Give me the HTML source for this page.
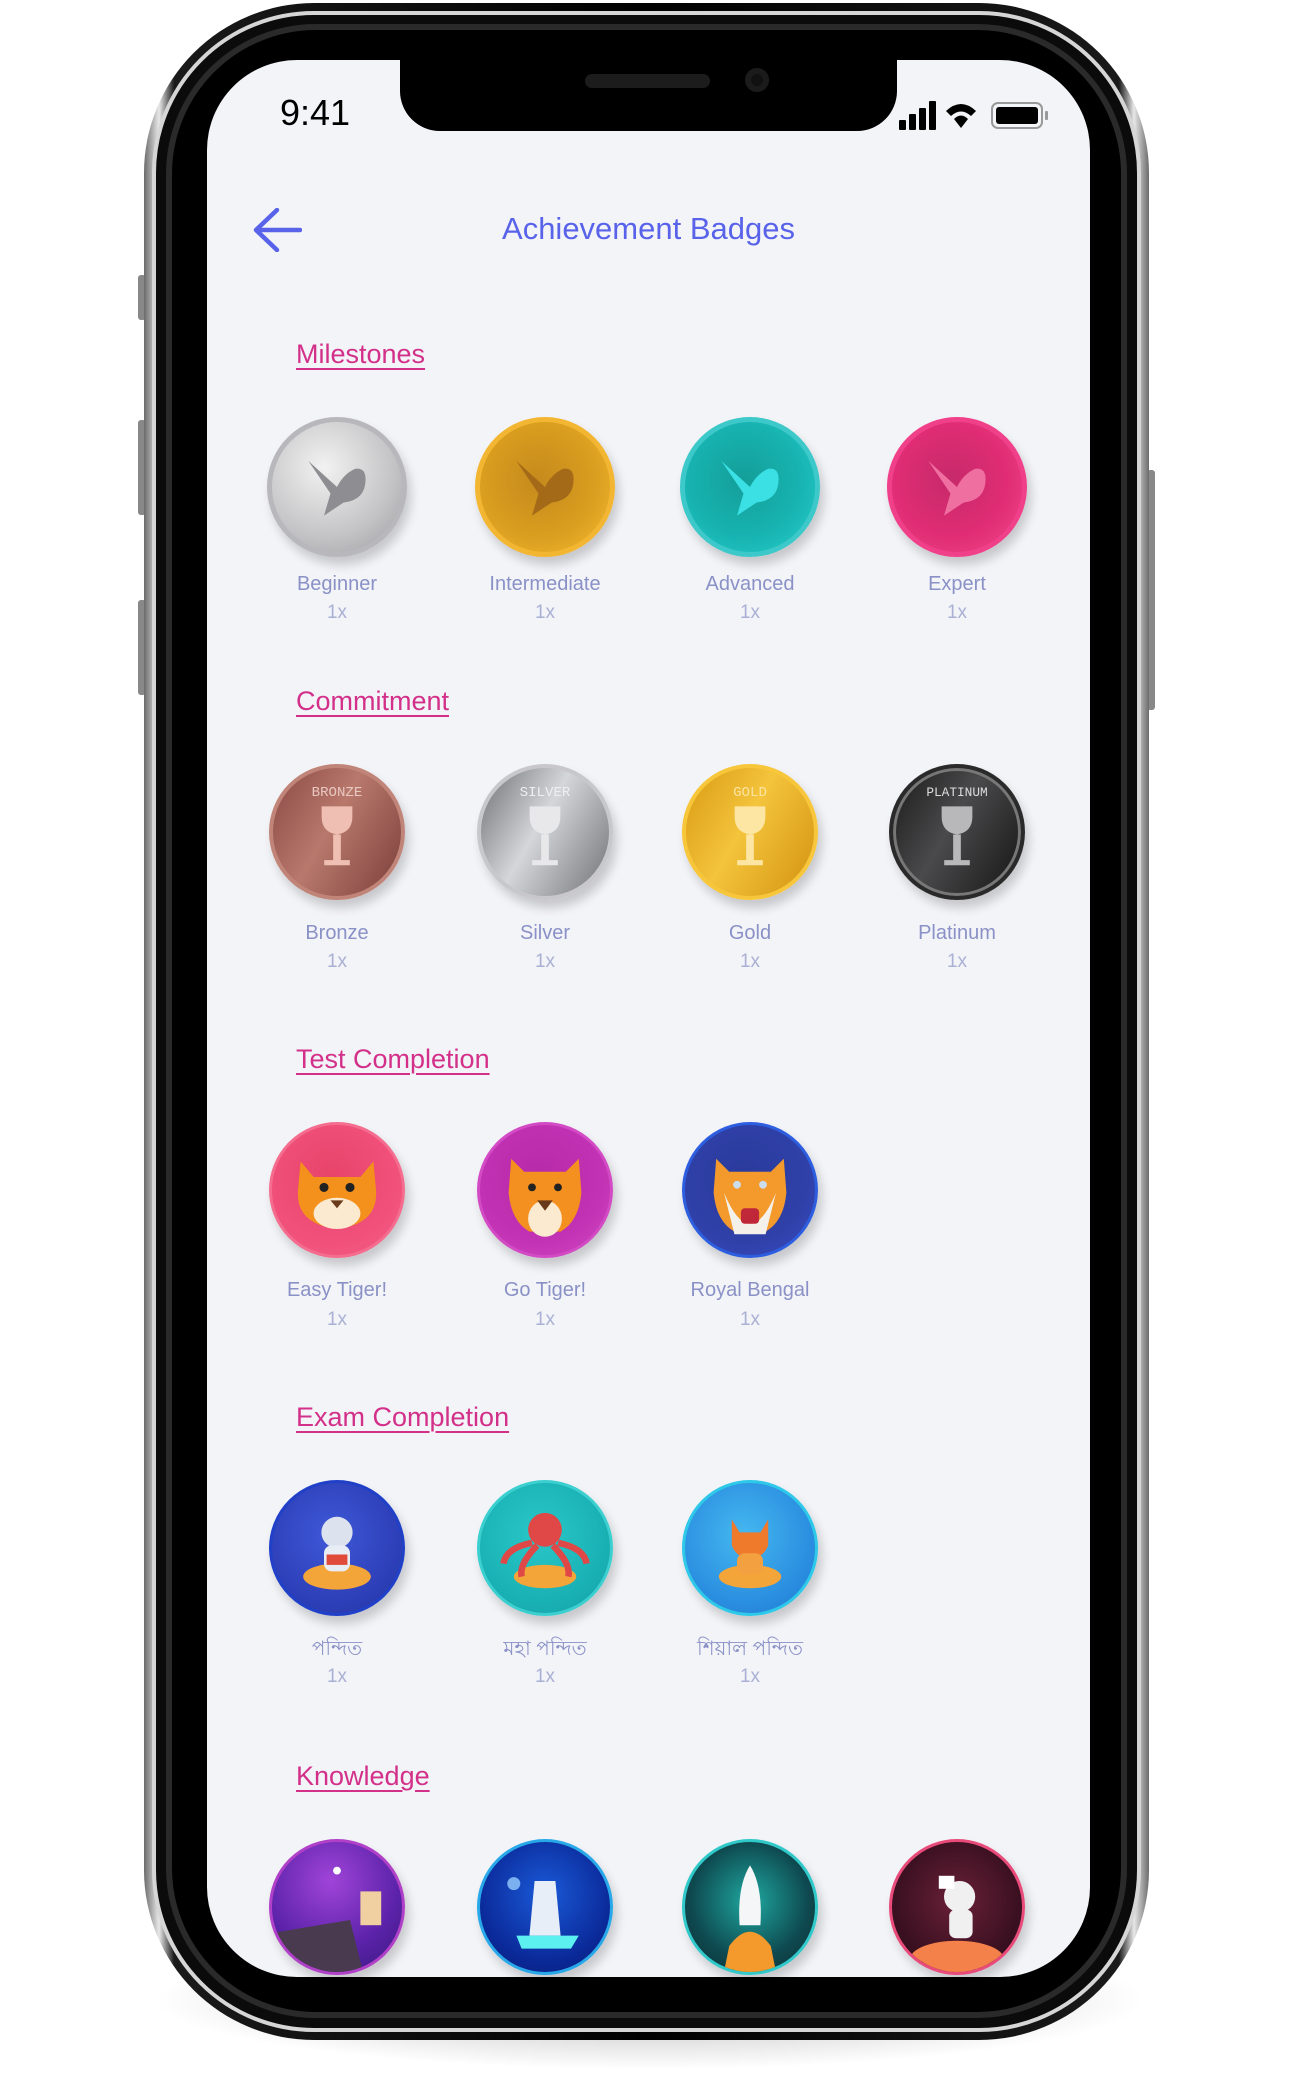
<!DOCTYPE html>
<html><head><meta charset="utf-8"><style>
*{margin:0;padding:0;box-sizing:border-box}
body{width:1296px;height:2095px;background:#fff;position:relative;overflow:hidden;font-family:"Liberation Sans","Noto Sans CJK SC",sans-serif}
.shadow{position:absolute;left:150px;top:1930px;width:1000px;height:140px;border-radius:50%;background:radial-gradient(ellipse at center,rgba(0,0,0,.28),rgba(0,0,0,0) 70%)}
.frame{position:absolute;left:144px;top:3px;width:1005px;height:2037px;border-radius:170px;background:linear-gradient(90deg,#6b6b6b,#e8e8e8 1.5%,#1a1a1a 3%,#000 50%,#1a1a1a 97%,#e8e8e8 98.5%,#6b6b6b)}
.frame2{position:absolute;left:152px;top:11px;width:989px;height:2021px;border-radius:162px;background:#0b0b0b;border:4px solid #d6d6d6}
.frame3{position:absolute;left:166px;top:24px;width:961px;height:1994px;border-radius:150px;background:#000;border:6px solid #2a2a2a}
.btn{position:absolute;background:#888;border-radius:3px}
.screen{position:absolute;left:207px;top:60px;width:883px;height:1917px;border-radius:90px;background:#f3f4f8;overflow:hidden}
.notch{position:absolute;left:193px;top:-10px;width:497px;height:81px;background:#000;border-radius:0 0 40px 40px}
.t{position:absolute;white-space:nowrap}
.sec{position:absolute;color:#d3308a;font-size:27px;text-decoration:underline;text-underline-offset:5px;text-decoration-thickness:1.5px}
.b{position:absolute;border-radius:50%;width:136px;height:136px;margin:-68px 0 0 -68px;box-shadow:4px 8px 10px rgba(0,0,0,.18);overflow:hidden}
.b svg{position:absolute;left:0;top:0;width:100%;height:100%}
.lb{position:absolute;width:200px;margin-left:-100px;text-align:center;color:#8a91c6;font-size:20px}
.lx{position:absolute;width:100px;margin-left:-50px;text-align:center;color:#aab0d4;font-size:19px}
</style></head><body>
<div class="shadow"></div>
<div class="btn" style="left:138px;top:275px;width:8px;height:45px"></div>
<div class="btn" style="left:138px;top:420px;width:8px;height:95px"></div>
<div class="btn" style="left:138px;top:600px;width:8px;height:95px"></div>
<div class="btn" style="left:1147px;top:470px;width:8px;height:240px"></div>
<div class="frame"></div><div class="frame2"></div><div class="frame3"></div>
<div class="screen">
 <div class="notch"></div>
 <div style="position:absolute;left:378px;top:14px;width:125px;height:14px;border-radius:7px;background:#1c1c1c"></div>
 <div style="position:absolute;left:538px;top:8px;width:24px;height:24px;border-radius:50%;background:#111;box-shadow:inset 0 0 0 6px #1b1b1b"></div>
 <div class="t" style="left:73px;top:32px;font-size:36px;color:#000">9:41</div>
 <svg style="position:absolute;left:692px;top:38px" width="160" height="36" viewBox="0 0 160 36">
  <rect x="0" y="22" width="7" height="10" rx="1" fill="#000"/><rect x="10" y="16" width="7" height="16" rx="1" fill="#000"/><rect x="20" y="10" width="7" height="22" rx="1" fill="#000"/><rect x="30" y="3" width="7" height="29" rx="1" fill="#000"/>
  <path d="M47 13 Q62 -1 77 13 L72 18 Q62 9 52 18Z M55 21 Q62 14 69 21 L62 30Z" fill="#000"/>
  <rect x="93" y="5" width="50" height="25" rx="6" fill="none" stroke="#999" stroke-width="2"/><rect x="97" y="9" width="42" height="17" rx="3" fill="#000"/><rect x="146" y="13" width="3" height="9" rx="1" fill="#999"/>
 </svg>
 <svg style="position:absolute;left:45px;top:148px" width="50" height="44" viewBox="0 0 50 44"><path d="M25 2 L4 22 L25 42 M4 22 L48 22" fill="none" stroke="#5963ea" stroke-width="4.5" stroke-linecap="round" stroke-linejoin="round"/></svg>
 <div class="t" style="left:0;width:883px;text-align:center;top:151px;font-size:31px;color:#5963ea">Achievement Badges</div>

 <div class="sec" style="left:89px;top:279px">Milestones</div>
 <div class="sec" style="left:89px;top:626px">Commitment</div>
 <div class="sec" style="left:89px;top:984px">Test Completion</div>
 <div class="sec" style="left:89px;top:1342px">Exam Completion</div>
 <div class="sec" style="left:89px;top:1701px">Knowledge</div>

 <!-- milestones -->
 <div class="b" style="left:130px;top:427px;width:140px;height:140px;margin:-70px 0 0 -70px;background:radial-gradient(circle at 40% 35%,#f2f2f2,#c4c4c6 60%,#9c9ca0);border:5px solid #b8b8bc"><svg viewBox="0 0 100 100"><path d="M28 30 L45 55 L40 72 L55 62 Q72 60 72 44 Q72 35 64 36 Q55 40 50 50 Z" fill="#8e8e92"/></svg></div>
 <div class="b" style="left:338px;top:427px;width:140px;height:140px;margin:-70px 0 0 -70px;background:radial-gradient(circle at 45% 45%,#c58a1c,#d99d1f 55%,#f5bc30);border:5px solid #f3b632"><svg viewBox="0 0 100 100"><path d="M28 30 L45 55 L40 72 L55 62 Q72 60 72 44 Q72 35 64 36 Q55 40 50 50 Z" fill="#a46a17"/></svg></div>
 <div class="b" style="left:543px;top:427px;width:140px;height:140px;margin:-70px 0 0 -70px;background:radial-gradient(circle at 45% 45%,#149e99,#17b3b0 55%,#27cfd0);border:5px solid #3dc8c9"><svg viewBox="0 0 100 100"><path d="M28 30 L45 55 L40 72 L55 62 Q72 60 72 44 Q72 35 64 36 Q55 40 50 50 Z" fill="#3be0e4"/></svg></div>
 <div class="b" style="left:750px;top:427px;width:140px;height:140px;margin:-70px 0 0 -70px;background:radial-gradient(circle at 45% 45%,#c62a6a,#e02c74 55%,#f24a8c);border:5px solid #f0408a"><svg viewBox="0 0 100 100"><path d="M28 30 L45 55 L40 72 L55 62 Q72 60 72 44 Q72 35 64 36 Q55 40 50 50 Z" fill="#f06fa1"/></svg></div>
 <div class="lb" style="left:130px;top:513px">Beginner</div><div class="lx" style="left:130px;top:542px">1x</div>
 <div class="lb" style="left:338px;top:513px">Intermediate</div><div class="lx" style="left:338px;top:542px">1x</div>
 <div class="lb" style="left:543px;top:513px">Advanced</div><div class="lx" style="left:543px;top:542px">1x</div>
 <div class="lb" style="left:750px;top:513px">Expert</div><div class="lx" style="left:750px;top:542px">1x</div>

 <!-- commitment -->
 <div class="b" style="left:130px;top:772px;background:linear-gradient(120deg,#8a4a45,#b8786c 45%,#7b3f3a);border:4px solid #c08478"><svg viewBox="0 0 100 100"><text x="50" y="22" text-anchor="middle" font-size="11" fill="#e8c8c0" font-family="Liberation Mono">BRONZE</text><path d="M38 30h24v8q0 12-12 14q-12-2-12-14z M47 52h6v20h-6z M40 72h20v4H40z" fill="#efbfb3"/></svg></div>
 <div class="b" style="left:338px;top:772px;background:linear-gradient(120deg,#6e7074,#d4d6da 45%,#707276);border:4px solid #c8c8cc"><svg viewBox="0 0 100 100"><text x="50" y="22" text-anchor="middle" font-size="11" fill="#eee" font-family="Liberation Mono">SILVER</text><path d="M38 30h24v8q0 12-12 14q-12-2-12-14z M47 52h6v20h-6z M40 72h20v4H40z" fill="#e8e8ea"/></svg></div>
 <div class="b" style="left:543px;top:772px;background:linear-gradient(120deg,#d89a12,#f4c43c 45%,#d39210);border:4px solid #f7c63a"><svg viewBox="0 0 100 100"><text x="50" y="22" text-anchor="middle" font-size="11" fill="#fbe3a0" font-family="Liberation Mono">GOLD</text><path d="M38 30h24v8q0 12-12 14q-12-2-12-14z M47 52h6v20h-6z M40 72h20v4H40z" fill="#fde6a4"/></svg></div>
 <div class="b" style="left:750px;top:772px;background:linear-gradient(120deg,#1a1a1a,#4a4a4c 45%,#141414);border:4px solid #2a2a2a;box-shadow:4px 8px 10px rgba(0,0,0,.18),inset 0 0 0 3px #777"><svg viewBox="0 0 100 100"><text x="50" y="22" text-anchor="middle" font-size="10" fill="#ddd" font-family="Liberation Mono">PLATINUM</text><path d="M38 30h24v8q0 12-12 14q-12-2-12-14z M47 52h6v20h-6z M40 72h20v4H40z" fill="#b8b8ba"/></svg></div>
 <div class="lb" style="left:130px;top:862px">Bronze</div><div class="lx" style="left:130px;top:891px">1x</div>
 <div class="lb" style="left:338px;top:862px">Silver</div><div class="lx" style="left:338px;top:891px">1x</div>
 <div class="lb" style="left:543px;top:862px">Gold</div><div class="lx" style="left:543px;top:891px">1x</div>
 <div class="lb" style="left:750px;top:862px">Platinum</div><div class="lx" style="left:750px;top:891px">1x</div>

 <!-- test completion -->
 <div class="b" style="left:130px;top:1130px;background:radial-gradient(circle at 45% 40%,#e8446a,#f0507a 60%,#f45f86);border:3px solid #f46c8e"><svg viewBox="0 0 100 100"><path d="M22 28 L32 40 L68 40 L78 28 L80 50 Q82 76 50 80 Q18 76 20 50Z" fill="#f4911c"/><ellipse cx="50" cy="68" rx="18" ry="12" fill="#fbe9d0"/><circle cx="40" cy="48" r="3.5" fill="#222"/><circle cx="60" cy="48" r="3.5" fill="#222"/><path d="M45 58 L55 58 L50 64Z" fill="#6a3b1a"/></svg></div>
 <div class="b" style="left:338px;top:1130px;background:radial-gradient(circle at 45% 40%,#b62aa8,#c232b4 60%,#d04ac2);border:3px solid #d24ac4"><svg viewBox="0 0 100 100"><path d="M24 26 L34 36 L66 36 L76 26 L78 52 Q76 74 62 82 L38 82 Q24 74 22 52Z" fill="#f49020"/><ellipse cx="50" cy="72" rx="13" ry="14" fill="#fbe9d0"/><path d="M44 58 L56 58 L50 66Z" fill="#6a3b1a"/><circle cx="40" cy="48" r="3" fill="#222"/><circle cx="60" cy="48" r="3" fill="#222"/></svg></div>
 <div class="b" style="left:543px;top:1130px;background:radial-gradient(circle at 45% 40%,#2a3b9c,#2f40a8 60%,#3a4cc4);border:3px solid #2e5ee0"><svg viewBox="0 0 100 100"><path d="M24 26 L34 36 L66 36 L76 26 L78 52 Q76 74 62 82 L38 82 Q24 74 22 52Z" fill="#f49a2c"/><path d="M30 52 Q50 100 70 52 L62 84 L38 84Z" fill="#f4f0ea"/><rect x="43" y="64" width="14" height="12" rx="3" fill="#c0283a"/><circle cx="40" cy="46" r="3" fill="#cde"/><circle cx="60" cy="46" r="3" fill="#cde"/></svg></div>
 <div class="lb" style="left:130px;top:1219px">Easy Tiger!</div><div class="lx" style="left:130px;top:1249px">1x</div>
 <div class="lb" style="left:338px;top:1219px">Go Tiger!</div><div class="lx" style="left:338px;top:1249px">1x</div>
 <div class="lb" style="left:543px;top:1219px">Royal Bengal</div><div class="lx" style="left:543px;top:1249px">1x</div>

 <!-- exam completion -->
 <div class="b" style="left:130px;top:1488px;background:radial-gradient(circle at 45% 40%,#3f58d8,#2d3fb8 65%,#2535a0);border:3px solid #2040c8"><svg viewBox="0 0 100 100"><ellipse cx="50" cy="72" rx="26" ry="10" fill="#f4a53a"/><circle cx="50" cy="38" r="12" fill="#dde3ee"/><rect x="40" y="48" width="20" height="20" rx="6" fill="#e8ecf4"/><rect x="42" y="55" width="16" height="8" fill="#e04a3a"/></svg></div>
 <div class="b" style="left:338px;top:1488px;background:radial-gradient(circle at 45% 40%,#2ac8c8,#19b0b4 65%,#16a0a4);border:3px solid #3ccfd0"><svg viewBox="0 0 100 100"><ellipse cx="50" cy="72" rx="24" ry="9" fill="#f4a53a"/><circle cx="50" cy="36" r="13" fill="#e04848"/><path d="M40 46 Q20 50 18 62 M44 48 Q30 62 32 72 M56 48 Q70 62 68 72 M60 46 Q80 50 82 62" stroke="#e04848" stroke-width="5" fill="none"/></svg></div>
 <div class="b" style="left:543px;top:1488px;background:radial-gradient(circle at 45% 40%,#45b8f0,#2a8ee0 65%,#1f78d0);border:3px solid #2ec8e8"><svg viewBox="0 0 100 100"><ellipse cx="50" cy="72" rx="24" ry="9" fill="#f4a53a"/><path d="M36 28 L42 38 L58 38 L64 28 L64 48 Q60 58 50 58 Q40 58 36 48Z" fill="#f07a2c"/><rect x="40" y="54" width="20" height="16" rx="6" fill="#f2a040"/></svg></div>
 <div class="lb" style="left:130px;top:1574px">পন্দিত</div><div class="lx" style="left:130px;top:1606px">1x</div>
 <div class="lb" style="left:338px;top:1574px">মহা পন্দিত</div><div class="lx" style="left:338px;top:1606px">1x</div>
 <div class="lb" style="left:543px;top:1574px">শিয়াল পন্দিত</div><div class="lx" style="left:543px;top:1606px">1x</div>

 <!-- knowledge -->
 <div class="b" style="left:130px;top:1847px;background:radial-gradient(circle at 45% 30%,#a044d8,#5a22a8 60%,#3a1a80);border:3px solid #b040c8"><svg viewBox="0 0 100 100"><circle cx="50" cy="22" r="3" fill="#fff"/><path d="M0 70 L60 60 L70 100 L0 100Z" fill="#4a3a50"/><rect x="68" y="38" width="16" height="26" fill="#f0d0a0"/></svg></div>
 <div class="b" style="left:338px;top:1847px;background:radial-gradient(circle at 50% 40%,#1a5ad8,#0b2a9a 65%,#061a70);border:3px solid #28a8e8"><svg viewBox="0 0 100 100"><path d="M42 30 L58 30 L62 72 L38 72Z" fill="#e8eef8"/><path d="M28 72 L76 72 L70 82 L32 82Z" fill="#5cf0f0"/><circle cx="26" cy="32" r="5" fill="#7ab0f0"/></svg></div>
 <div class="b" style="left:543px;top:1847px;background:radial-gradient(circle at 50% 45%,#1fa8a0,#0e4a50 60%,#0b2a30);border:3px solid #30c8c8"><svg viewBox="0 0 100 100"><path d="M50 18 Q60 34 58 64 L42 64 Q40 34 50 18Z" fill="#f4f6f8"/><path d="M34 80 Q50 58 66 80 L70 100 L30 100Z" fill="#f49a2c"/></svg></div>
 <div class="b" style="left:750px;top:1847px;background:radial-gradient(circle at 50% 45%,#6a2038,#3a1020 65%,#2a0a18);border:3px solid #e84a7a"><svg viewBox="0 0 100 100"><circle cx="52" cy="42" r="12" fill="#f0f0f0"/><rect x="44" y="52" width="18" height="22" rx="5" fill="#f0f0f0"/><ellipse cx="50" cy="90" rx="36" ry="14" fill="#f4804a"/><rect x="36" y="26" width="12" height="10" fill="#fff"/></svg></div>
</div>
</body></html>
